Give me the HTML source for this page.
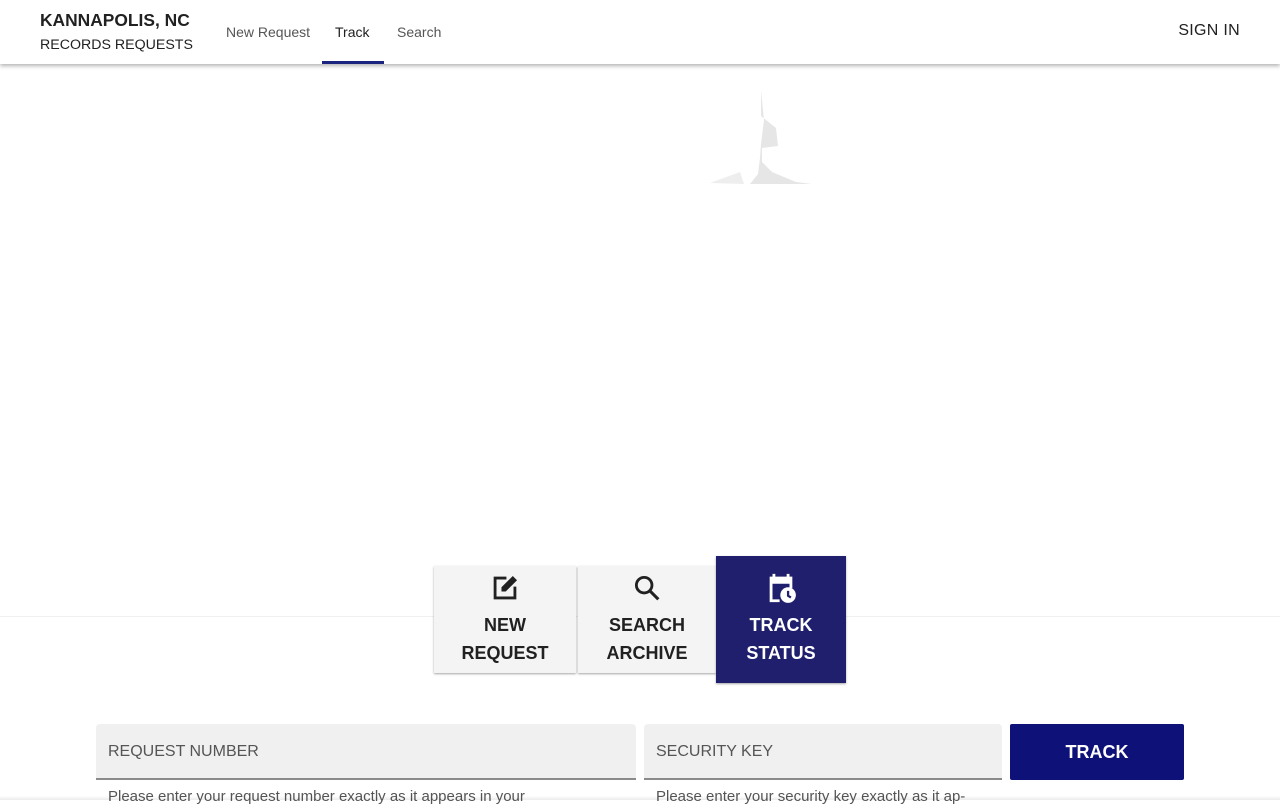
<!DOCTYPE html>
<html><head><style>
*{margin:0;padding:0;box-sizing:border-box}
body{width:1280px;height:800px;overflow:hidden;background:#fff;font-family:"Liberation Sans",sans-serif;position:relative}
.hdr{position:absolute;top:0;left:0;width:1280px;height:64px;background:#fff;box-shadow:0 2px 4px rgba(0,0,0,.3);z-index:5}
.t1{position:absolute;left:40px;top:10px;font-size:17.4px;font-weight:bold;color:#212121}
.t2{position:absolute;left:40px;top:37px;font-size:14.2px;color:#212121}
.nav{position:absolute;top:24px;font-size:14px;color:#555}
.sign{position:absolute;right:40px;top:22px;font-size:16px;color:#212121;font-weight:500;letter-spacing:.3px}
.line{position:absolute;left:0;top:616px;width:1280px;height:1px;background:#f0f0f0}
.tile{position:absolute;top:566px;height:107px;background:#f4f4f4;box-shadow:0 1px 2px rgba(0,0,0,.35);text-align:center;font-weight:bold;font-size:18px;color:#212121;line-height:28px}
.tile svg{display:block;margin:5px auto 6px}
.field{position:absolute;top:724px;height:56px;background:#f0f0f0;border-bottom:2px solid #8a8a8a;border-radius:4px 4px 0 0;font-size:16px;color:#555;padding:19px 12px}
.help{position:absolute;top:788px;font-size:15px;color:#555}
</style></head><body>
<div class="hdr">
<div class="t1">KANNAPOLIS, NC</div>
<div class="t2">RECORDS REQUESTS</div>
<div class="nav" style="left:226px">New Request</div>
<div class="nav" style="left:335px;color:#212121;font-weight:500">Track</div>
<div style="position:absolute;left:322px;top:61px;width:62px;height:3px;background:#1a237e"></div>
<div class="nav" style="left:397px">Search</div>
<div class="sign">SIGN IN</div>
</div>
<svg style="position:absolute;left:700px;top:88px" width="120" height="96"><polygon points="61,2 61,28 76,40 78,58 62,60 62,74 72,84 96,94 112,96 50,96 58,86 60,70 61,56 64,32" fill="#e6e6e6"/><polygon points="10,95 40,84 44,96" fill="#eee"/></svg>
<div class="line"></div>
<div class="tile" style="left:434px;width:142px"><svg width="34" height="34" viewBox="0 0 24 24"><path d="M5 4h8v2H6v12h12v-7h2v9H4V4z" fill="#212121"/><path d="M17.5 3.5l3 3-8 8H9.5v-3z" fill="#212121"/></svg>NEW<br>REQUEST</div>
<div class="tile" style="left:578px;width:138px"><svg width="34" height="34" viewBox="0 0 24 24"><circle cx="10" cy="10" r="5.5" fill="none" stroke="#212121" stroke-width="2"/><path d="M14 14l6 6" stroke="#212121" stroke-width="2.2"/></svg>SEARCH<br>ARCHIVE</div>
<div class="tile" style="left:716px;top:556px;width:130px;height:127px;background:#1f1f6e;color:#fff;padding-top:10px"><svg width="34" height="34" viewBox="0 0 24 24"><path d="M6 2h2v2h8V2h2v2h2v8h-2V9H6v11h5v2H4V4h2z" fill="#fff"/><circle cx="17" cy="17" r="5.5" fill="#fff"/><path d="M17 14v3.5l2 1.2" stroke="#1f1f6e" stroke-width="1.6" fill="none"/></svg>TRACK<br>STATUS</div>
<div class="field" style="left:96px;width:540px">REQUEST NUMBER</div>
<div class="field" style="left:644px;width:358px">SECURITY KEY</div>
<div style="position:absolute;left:1010px;top:724px;width:174px;height:56px;background:#0d1178;color:#fff;font-weight:bold;font-size:18px;text-align:center;line-height:56px;border-radius:2px">TRACK</div>
<div class="help" style="left:108px">Please enter your request number exactly as it appears in your</div>
<div class="help" style="left:656px">Please enter your security key exactly as it ap-</div>
<div style="position:absolute;left:0;top:796px;width:1280px;height:4px;background:linear-gradient(rgba(0,0,0,0),rgba(0,0,0,.08))"></div>
</body></html>
